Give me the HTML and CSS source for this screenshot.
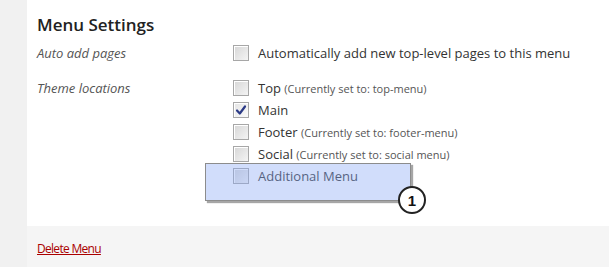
FILE: index.html
```html
<!doctype html>
<html>
    <head>
        <link rel="stylesheet" href="styles.css">
    </head>
    <body>
        <div class="page">
            <div class="sidebar"></div>
            <div class="panel">
                <div class="settings">
                    <h3 class="title">Menu Settings</h3>
                    <div class="row">
                        <div class="label">Auto add pages</div>
                        <div class="options">
                            <div class="option">
                                <span class="box"></span>
                                <span>Automatically add new top-level pages to this menu</span>
                            </div>
                        </div>
                    </div>
                    <div class="row">
                        <div class="label">Theme locations</div>
                        <div class="options">
                            <div class="option">
                                <span class="box"></span>
                                <span>Top <small class="note">(Currently set to: top-menu)</small></span>
                            </div>
                            <div class="option">
                                <span class="box checked">
                                    <svg width="12" height="12" viewBox="0 0 12 12"><path d="M2 6.5 L4.8 9.5 L10 2.5" fill="none" stroke="#2b3a86" stroke-width="2.2" stroke-linecap="round" stroke-linejoin="round"/></svg>
                                </span>
                                <span>Main</span>
                            </div>
                            <div class="option">
                                <span class="box"></span>
                                <span>Footer <small class="note">(Currently set to: footer-menu)</small></span>
                            </div>
                            <div class="option">
                                <span class="box"></span>
                                <span>Social <small class="note">(Currently set to: social menu)</small></span>
                            </div>
                            <div class="option marked">
                                <span class="box"></span>
                                <span>Additional Menu</span>
                                <div class="callout">
                                    <span class="badge">1</span>
                                </div>
                            </div>
                        </div>
                    </div>
                </div>
                <div class="footer">
                    <a class="delete" href="#">Delete Menu</a>
                </div>
            </div>
        </div>
    </body>
</html>
```

FILE: styles.css
```css
body {
    margin: 0;
    font-family: "Open Sans", "Liberation Sans", sans-serif;
    color: #333;
    background: #fff;
}

.page {
    display: flex;
    height: 267px;
}

.sidebar {
    width: 27px;
    background: #f1f1f1;
}

.panel {
    flex: 1;
    display: flex;
    flex-direction: column;
}

.settings {
    flex: 1;
    padding: 13px 0 0 10px;
}

.title {
    margin: 0 0 5px;
    font-size: 17px;
    font-weight: 600;
    color: #222;
    line-height: 24px;
}

.row {
    display: grid;
    grid-template-columns: 196px 1fr;
    margin-bottom: 13px;
}

.label {
    font-style: italic;
    font-size: 13px;
    color: #555;
    line-height: 22px;
}

.option {
    position: relative;
    display: flex;
    align-items: center;
    gap: 9px;
    height: 22px;
    font-size: 13px;
}

.box {
    width: 14px;
    height: 14px;
    border: 1px solid #a7a7a7;
    background: linear-gradient(135deg, #d6d6d6, #f4f4f4);
    box-shadow: inset 1px 1px 0 #fff;
    display: flex;
    align-items: center;
    justify-content: center;
}

.box.checked {
    background: linear-gradient(135deg, #e4e4e4, #fafafa);
}

.note {
    font-size: 11px;
    color: #555;
}

.callout {
    position: absolute;
    left: -28px;
    top: -2px;
    width: 204px;
    height: 36px;
    border: 1px solid #8c8c8c;
    background: rgba(139, 170, 245, 0.4);
    box-shadow: 2px 2px 1px rgba(0, 0, 0, 0.35);
}

.badge {
    position: absolute;
    right: -16px;
    top: 22px;
    width: 24px;
    height: 24px;
    border: 2px solid #222;
    border-radius: 50%;
    background: #fff;
    font-family: "Liberation Sans", sans-serif;
    font-weight: bold;
    font-size: 15px;
    color: #111;
    display: flex;
    align-items: center;
    justify-content: center;
}

.footer {
    height: 41px;
    background: #f5f5f5;
    padding-left: 10px;
    display: flex;
    align-items: center;
}

.delete {
    font-size: 12px;
    letter-spacing: -0.7px;
    color: #a00;
    text-decoration: underline;
    margin-top: 4px;
}
```
